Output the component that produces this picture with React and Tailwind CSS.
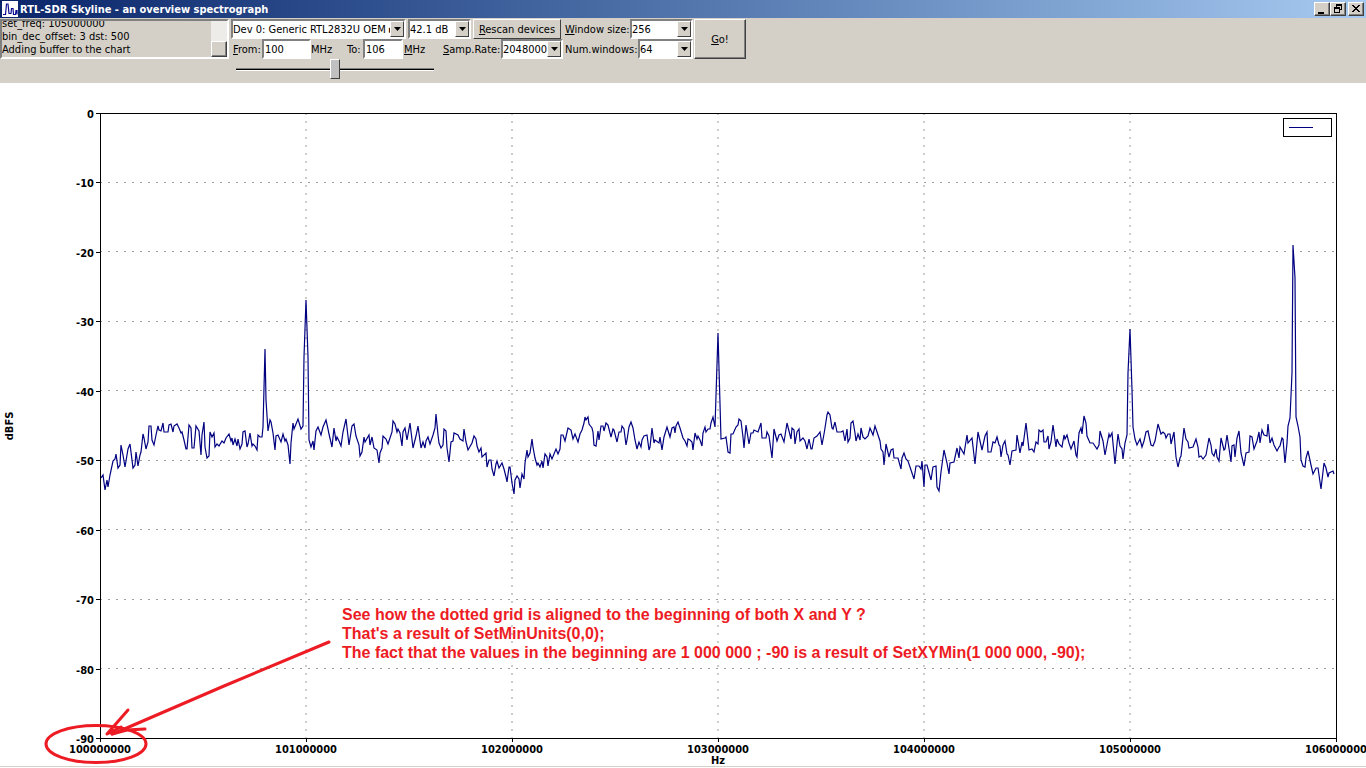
import React, { useEffect, useRef } from "react";

const LOG = "set_freq: 105000000\nbin_dec_offset: 3 dst: 500\nAdding buffer to the chart";

const SUNKEN =
  "border-2 border-t-[#808080] border-l-[#808080] border-r-white border-b-white";
const RAISED =
  "bg-[#d4d0c8] border border-t-white border-l-white border-r-[#404040] border-b-[#404040]";

const Y_TICKS = [0, -10, -20, -30, -40, -50, -60, -70, -80, -90];
const X_TICKS = [
  100000000, 101000000, 102000000, 103000000, 104000000, 105000000, 106000000,
];

// Signal trace, in chart coordinates
const TRACE = `
101,478 103,475 105,490 107,480 108,487 110,475 113,461 115,459 116,454 118,468 120,465 121,445 123,455 125,467
127,455 128,449 130,444 133,468 135,465 136,452 138,466 140,455 141,452 143,434 144,438 146,449 148,442 149,426
151,426 152,440 154,445 156,435 158,426 159,430 161,431 163,423 164,432 168,432 169,425 171,424 173,432 174,426
177,424 179,428 181,433 182,432 184,440 186,449 187,449 189,425 191,428 192,448 194,448 196,426 199,431 201,455
202,435 204,422 205,447 207,458 209,456 210,432 212,437 214,433 215,447 217,444 219,446 222,441 224,443 226,438
229,434 231,441 232,438 233,445 235,439 237,446 238,439 240,449 242,444 243,432 245,431 247,447 248,444 250,433
252,446 253,444 255,446 257,450 258,435 260,437 262,437 263,427 265,349 266,400 268,431 270,420 271,422 273,433
275,450 276,436 278,435 281,442 283,434 285,441 286,439 288,445 290,464 291,443 293,423 294,429 298,419 301,429
303,426 304,357 306,300 308,357 309,440 311,447 313,441 314,450 316,431 318,427 321,435 323,427 326,420 328,429
329,434 332,447 334,428 336,441 337,437 339,441 341,446 343,432 346,419 349,445 352,426 354,424 356,436 359,445
360,456 362,452 364,437 365,442 369,435 370,445 372,437 374,448 377,450 379,463 380,453 382,448 383,436 386,439
388,444 390,438 392,432 393,421 395,424 397,432 398,429 400,433 402,446 403,432 405,428 407,440 410,423 413,448
416,436 418,426 421,448 423,442 425,448 426,441 428,437 430,444 432,438 433,435 435,428 436,414 438,435 439,443
441,448 443,445 444,429 446,431 447,448 449,462 451,442 453,441 454,433 458,435 460,439 463,441 464,429 466,442
468,450 472,443 474,436 476,439 477,446 479,452 481,448 482,457 486,453 487,467 489,460 491,460 492,469 494,476
496,464 497,461 499,468 502,463 504,469 506,477 507,482 509,467 510,467 512,483 514,494 515,480 517,476 519,479
520,488 522,474 524,479 525,463 527,450 528,457 530,453 532,439 533,447 535,458 537,465 538,463 540,467 542,461
543,468 545,454 547,457 548,466 550,454 552,459 556,449 558,454 560,449 561,435 563,435 565,441 568,428 571,430
573,439 575,434 578,442 580,434 582,430 584,423 585,417 586,420 588,417 589,424 592,428 593,432 594,445 596,446
598,431 599,440 601,426 603,426 604,431 606,423 608,425 611,437 613,429 614,430 617,442 619,432 621,432 622,426
624,429 626,445 627,440 629,427 631,422 633,428 635,440 637,449 639,442 641,447 642,440 644,436 647,435 649,450
650,447 652,428 654,443 655,440 659,443 660,437 662,450 664,437 667,427 670,437 672,428 674,427 675,433 676,426
678,422 680,428 683,438 685,441 687,446 688,439 690,440 692,442 693,450 695,433 697,439 698,436 700,440 702,446
703,433 705,427 706,432 708,429 710,429 711,423 713,417 715,427 718,333 721,439 725,438 726,437 728,452 730,453
731,434 733,434 736,427 738,425 739,419 741,421 743,437 744,448 746,425 749,444 751,433 753,433 754,430 758,432
761,423 762,438 766,438 767,432 769,436 772,458 774,429 777,441 779,435 781,434 784,442 787,423 791,439 792,428
794,430 795,444 797,432 799,429 800,441 803,438 805,441 807,449 809,439 811,449 812,449 814,438 817,436 820,432
822,445 824,434 825,428 827,415 828,412 830,415 832,428 833,429 835,422 837,432 841,432 843,431 845,441 847,429
848,442 850,438 851,423 853,421 855,433 856,441 858,434 860,440 861,428 863,437 865,439 868,436 870,428 873,435
875,426 878,435 880,441 881,449 883,452 884,465 886,444 889,457 891,450 893,449 894,458 898,458 901,469 902,458
904,453 906,459 908,461 910,467 914,479 916,466 919,466 921,469 922,461 924,487 925,465 927,465 931,480 933,467
936,466 937,487 939,491 941,472 944,450 947,463 949,474 950,463 954,462 957,448 959,458 960,447 964,454 967,435
968,443 972,438 975,464 978,432 982,450 985,436 987,432 988,452 991,452 993,442 995,443 997,437 999,445 1000,446
1001,457 1003,445 1005,441 1007,454 1008,455 1010,465 1012,451 1016,450 1017,435 1020,453 1022,442 1023,446
1026,423 1029,450 1032,449 1034,452 1036,442 1038,444 1039,430 1041,432 1043,430 1044,442 1046,442 1048,436
1049,449 1051,442 1053,425 1056,447 1057,439 1059,444 1062,447 1064,435 1065,439 1067,435 1069,443 1071,449
1074,441 1076,455 1077,457 1079,433 1081,428 1082,434 1084,416 1086,423 1087,436 1090,443 1093,443 1097,449
1099,445 1100,431 1103,441 1105,455 1109,434 1110,437 1112,433 1115,464 1118,434 1120,446 1122,449 1123,459
1125,443 1127,435 1128,373 1130,329 1132,390 1133,427 1135,439 1137,445 1140,439 1142,447 1144,441 1146,432
1148,431 1151,445 1153,446 1155,441 1158,424 1161,434 1163,432 1165,434 1166,438 1168,434 1170,434 1171,444
1174,432 1176,457 1178,467 1180,458 1181,456 1184,428 1186,439 1188,442 1189,448 1193,447 1196,439 1198,447
1199,457 1201,456 1203,459 1206,455 1209,438 1211,445 1212,453 1214,456 1216,449 1217,457 1219,461 1221,438
1224,450 1225,449 1227,435 1231,462 1232,446 1234,445 1235,457 1237,438 1239,431 1241,453 1244,466 1246,453
1249,452 1250,436 1252,437 1254,449 1257,441 1259,432 1260,443 1262,430 1264,435 1267,436 1268,424 1270,443
1272,438 1274,445 1277,451 1279,447 1280,446 1282,438 1283,439 1285,463 1287,443 1288,426 1290,418 1292,373
1293,245 1295,278 1296,417 1298,426 1300,437 1301,460 1303,466 1305,467 1306,458 1308,451 1311,465 1313,474
1316,468 1318,468 1321,489 1324,463 1326,468 1328,477 1329,473 1333,471 1334,474`;

export default function App() {
  return (
    <div className="min-h-screen bg-white font-['DejaVu_Sans_Condensed','DejaVu_Sans',sans-serif] text-[11px] leading-[13px] text-black">
      <TitleBar />
      <Toolbar />
      <main className="border-b border-[#d4d0c8]">
        <Chart />
      </main>
    </div>
  );
}

function TitleBar() {
  return (
    <header className="flex h-[18px] items-center bg-linear-to-r from-[#0a246a] to-[#a6caf0] pl-0.5">
      <Logo />
      <h1 className="ml-0.5 flex-1 text-[11px] font-bold whitespace-nowrap text-white">
        RTL-SDR Skyline - an overview spectrograph
      </h1>
      <div className="flex pr-0.5">
        <WindowButton label="Minimize">
          <path d="M3 9h6v2H3z" />
        </WindowButton>
        <WindowButton label="Restore">
          <path d="M5 1h6v6H9V6h1V3H6v1H5zM3 4h6v6H3zm1 2v3h4V6z" fillRule="evenodd" />
        </WindowButton>
        <span className="w-0.5" />
        <WindowButton label="Close">
          <path d="M3 2h2v1h1v1h2V3h1V2h2v1h-1v1H9v1H8v1h1v1h1v1h1v1H9V8H8V7H6v1H5v1H3V8h1V7h1V6h1V5H5V4H4V3H3z" />
        </WindowButton>
      </div>
    </header>
  );
}

function WindowButton({ label, children }) {
  return (
    <button
      type="button"
      aria-label={label}
      className={`flex h-3.5 w-4 items-center justify-center shadow-[inset_-1px_-1px_0_#808080] ${RAISED}`}
    >
      <svg width="14" height="12" viewBox="0 0 14 12" className="shrink-0" shapeRendering="crispEdges">
        {children}
      </svg>
    </button>
  );
}

function Logo() {
  return (
    <svg width="16" height="16" viewBox="0 0 16 16" className="shrink-0">
      <rect width="16" height="16" fill="white" />
      <path
        d="M1 13.500h2.500L4.500 3H6l1 9.500h2l.500-5H11l.500 6h2l.500-4h1v4"
        fill="none"
        stroke="#0a0a90"
        strokeWidth="1.200"
      />
    </svg>
  );
}

function Toolbar() {
  return (
    <div className="flex h-[65px] items-start bg-[#d4d0c8] pt-px">
      <LogBox />

      {/* Device, range and sample rate */}
      <div className="ml-0.5 w-[334px] shrink-0">
        <div className="flex gap-0.5">
          <Combo label="Device" value="Dev 0: Generic RTL2832U OEM ▸" className="w-[175px]" />
          <Combo label="Gain" value="42.1 dB" className="w-[63px]" />
          <button type="button" className={`h-5 w-[88px] whitespace-nowrap ${RAISED}`}>
            <u>R</u>escan devices
          </button>
        </div>
        <div className="flex items-center">
          <label htmlFor="from" className="w-[31px] pl-0.5 whitespace-nowrap">
            <u>F</u>rom:
          </label>
          <input
            id="from"
            defaultValue="100"
            className={`h-5 w-[49px] bg-white px-px ${SUNKEN}`}
          />
          <span className="w-[36px]">MHz</span>
          <label htmlFor="to" className="w-[16px] whitespace-nowrap">
            To:
          </label>
          <input
            id="to"
            defaultValue="106"
            className={`h-5 w-[40px] bg-white px-px ${SUNKEN}`}
          />
          <span className="w-[40px] pl-px">
            <u>M</u>Hz
          </span>
          <label htmlFor="rate" className="w-[58px] whitespace-nowrap">
            <u>S</u>amp.Rate:
          </label>
          <Combo id="rate" value="2048000" className="w-[62px]" />
        </div>
        <input
          type="range"
          aria-label="Range"
          defaultValue="50"
          className="ml-[5px] block h-5 w-[198px] appearance-none bg-transparent [&::-webkit-slider-runnable-track]:h-[3px] [&::-webkit-slider-runnable-track]:border-t [&::-webkit-slider-runnable-track]:border-b [&::-webkit-slider-runnable-track]:border-t-[#808080] [&::-webkit-slider-runnable-track]:border-b-white [&::-webkit-slider-runnable-track]:bg-black [&::-webkit-slider-thumb]:-mt-[10px] [&::-webkit-slider-thumb]:h-5 [&::-webkit-slider-thumb]:w-[10px] [&::-webkit-slider-thumb]:appearance-none [&::-webkit-slider-thumb]:border [&::-webkit-slider-thumb]:border-t-white [&::-webkit-slider-thumb]:border-r-[#404040] [&::-webkit-slider-thumb]:border-b-[#404040] [&::-webkit-slider-thumb]:border-l-white [&::-webkit-slider-thumb]:bg-[#c0c0c0]"
        />
      </div>

      {/* Window settings */}
      <div className="w-[128px] shrink-0">
        <div className="flex items-center justify-between">
          <label htmlFor="window-size" className="whitespace-nowrap">
            <u>W</u>indow size:
          </label>
          <Combo id="window-size" value="256" className="w-[63px]" />
        </div>
        <div className="flex items-center justify-between">
          <label htmlFor="num-windows" className="whitespace-nowrap">
            Num.windows:
          </label>
          <Combo id="num-windows" value="64" className="w-[55px]" />
        </div>
      </div>

      <button
        type="button"
        className={`ml-px h-10 w-[52px] shrink-0 shadow-[inset_-1px_-1px_0_#808080] ${RAISED}`}
      >
        <u>G</u>o!
      </button>
    </div>
  );
}

function LogBox() {
  const ref = useRef(null);

  useEffect(() => {
    ref.current.scrollTop = ref.current.scrollHeight;
  }, []);

  return (
    <div className={`flex h-10 w-[229px] shrink-0 ${SUNKEN}`}>
      <textarea
        ref={ref}
        readOnly
        aria-label="Log"
        defaultValue={LOG}
        className="h-full flex-1 resize-none overflow-hidden bg-transparent pb-px"
      />
      <div className="flex w-4 flex-col justify-end bg-[#eeece8]">
        <div className={`h-4 shadow-[inset_-1px_-1px_0_#808080] ${RAISED}`} />
      </div>
    </div>
  );
}

function Combo({ id, label, value, className }) {
  return (
    <div className={`relative h-5 shrink-0 bg-white ${SUNKEN} ${className}`}>
      <select
        id={id}
        aria-label={label}
        className="block h-full w-full appearance-none bg-transparent pr-3 whitespace-nowrap"
      >
        <option>{value}</option>
      </select>
      <span
        className={`pointer-events-none absolute top-0 right-0 flex h-4 w-3.5 items-center justify-center ${RAISED}`}
      >
        <svg width="7" height="4" viewBox="0 0 7 4">
          <path d="M0 0h7L3.500 4z" />
        </svg>
      </span>
    </div>
  );
}

function Chart() {
  return (
    <svg
      viewBox="0 83 1366 683"
      className="block h-auto w-full"
      role="img"
      aria-label="Spectrum, dBFS over Hz"
    >
      {/* Grid */}
      {Y_TICKS.slice(1, -1).map((t) => {
        const y = Math.floor(113 - t * 6.944) + 0.5;
        return (
          <line key={t} x1="100" x2="1336" y1={y} y2={y} stroke="#a0a0a0" strokeDasharray="2 6" />
        );
      })}
      {X_TICKS.slice(1, -1).map((t, i) => (
        <line
          key={t}
          x1={306 + i * 206}
          x2={306 + i * 206}
          y1="113"
          y2="738"
          stroke="#cccccc"
          strokeWidth="2"
          strokeDasharray="2 6"
        />
      ))}

      <polyline points={TRACE} fill="none" stroke="#000080" strokeWidth="1.200" />

      {/* Axes */}
      <rect x="100.500" y="113.500" width="1236" height="625" fill="none" stroke="black" />
      <g className="text-[11px] font-bold">
        {Y_TICKS.map((t, i) => {
          const y = Math.round(113 + i * 69.44);
          return (
            <g key={t}>
              <path d={`M96 ${y + 0.5}h4`} stroke="black" />
              <text x="94" y={y + 5} textAnchor="end">
                {t}
              </text>
            </g>
          );
        })}
        {X_TICKS.map((t, i) => (
          <g key={t}>
            <path d={`M${100.5 + i * 206} 738v4`} stroke="black" />
            <text x={100 + i * 206} y="753" textAnchor="middle">
              {t}
            </text>
          </g>
        ))}
        <text x="718" y="764" textAnchor="middle">
          Hz
        </text>
        <text transform="translate(13 426) rotate(-90)" textAnchor="middle">
          dBFS
        </text>
      </g>

      {/* Legend */}
      <rect x="1283.500" y="118.500" width="48" height="18" fill="white" stroke="black" />
      <path d="M1289 127.500h24" stroke="#000080" />

      {/* Annotation */}
      <g fill="none" stroke="#ed1c24" strokeWidth="3" strokeLinecap="round" strokeLinejoin="round">
        <ellipse cx="96" cy="744" rx="50" ry="18.500" />
        <path d="M329 642L224 686L122 730L112 734" />
        <path d="M128 710L107 734L121 727M112 734L127 730L145 729" />
      </g>
      <g fill="#ed1c24" className="font-['Liberation_Sans',Arial,sans-serif] text-[16px] font-bold">
        <text x="342" y="620">See how the dotted grid is aligned to the beginning of both X and Y ?</text>
        <text x="342" y="639">That's a result of SetMinUnits(0,0);</text>
        <text x="342" y="658">
          The fact that the values in the beginning are 1 000 000 ; -90 is a result of SetXYMin(1 000 000, -90);
        </text>
      </g>
    </svg>
  );
}
